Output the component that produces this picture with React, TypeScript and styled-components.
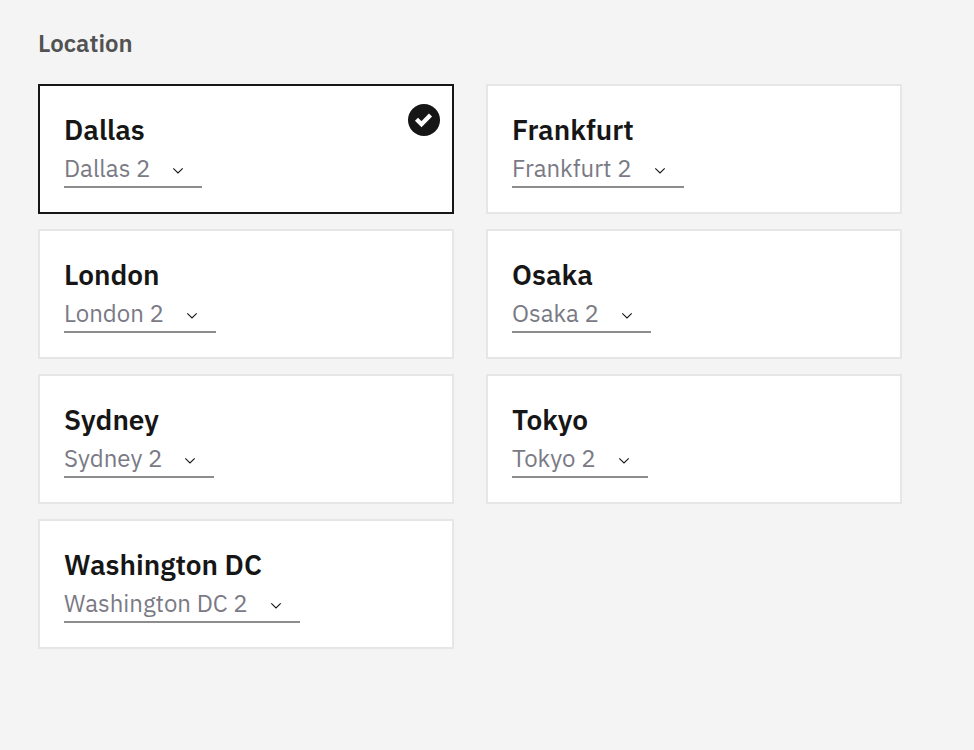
import { useState } from "react";
import styled, { createGlobalStyle } from "styled-components";

const GlobalStyle = createGlobalStyle`
  * { box-sizing: border-box; }
  body {
    margin: 0;
    background: #f4f4f4;
    color: #161616;
    font-family: "IBM Plex Sans", "Noto Sans", sans-serif;
  }
`;

const Section = styled.fieldset`
  margin: 0;
  padding: 27px 72px 28px 38px;
  border: 0;
  min-width: 0;
`;

const Heading = styled.legend`
  float: left;
  width: 100%;
  margin-bottom: 25px;
  padding: 0;
  color: #525252;
  font-size: 24px;
  font-weight: 600;
  line-height: 32px;
`;

const Grid = styled.div`
  clear: both;
  display: grid;
  grid-template-columns: repeat(2, minmax(0, 1fr));
  column-gap: 32px;
  row-gap: 15px;
`;

const Card = styled.div<{ $selected: boolean }>`
  position: relative;
  display: flex;
  flex-direction: column;
  align-items: flex-start;
  padding: 26px 24px 24px;
  background: #fff;
  border: 2px solid ${(p) => (p.$selected ? "#161616" : "#e6e6e6")};
`;

const CardLabel = styled.label`
  cursor: pointer;
  font-size: 28px;
  font-weight: 600;
  line-height: 36px;
`;

const Radio = styled.input`
  appearance: none;
  position: absolute;
  inset: 0;
  margin: 0;
  cursor: pointer;
`;

const Badge = styled.svg`
  position: absolute;
  top: 18px;
  right: 12px;
  width: 32px;
  height: 32px;
  pointer-events: none;
`;

const SelectBox = styled.div`
  position: relative;
  display: grid;
  align-items: center;
`;

const Select = styled.select`
  appearance: none;
  field-sizing: content;
  height: 40px;
  padding: 2px 52px 0 0;
  border: 0;
  border-bottom: 2px solid #8d8d8d;
  border-radius: 0;
  background: transparent;
  color: #7a7a85;
  font: 400 24px "IBM Plex Sans", "Noto Sans", sans-serif;
`;

const Chevron = styled.svg`
  position: absolute;
  right: 18px;
  bottom: 13px;
  width: 12px;
  height: 8px;
  pointer-events: none;
`;

const cities = ["Dallas", "Frankfurt", "London", "Osaka", "Sydney", "Tokyo", "Washington DC"];

export default function App() {
  const [selected, setSelected] = useState("Dallas");
  return (
    <>
      <GlobalStyle />
      <Section>
        <Heading>Location</Heading>
        <Grid>
          {cities.map((city) => {
            const id = city.toLowerCase().replace(" ", "-");
            return (
              <Card key={city} $selected={city === selected}>
                <Radio
                  type="radio"
                  name="location"
                  id={id}
                  checked={city === selected}
                  onChange={() => setSelected(city)}
                />
                <CardLabel htmlFor={id}>{city}</CardLabel>
                <SelectBox>
                  <Select aria-label={`${city} data center`} defaultValue="2">
                    <option value="2">{city} 2</option>
                  </Select>
                  <Chevron viewBox="0 0 12 8" aria-hidden="true">
                    <path d="M1.3 1.3 6 6 10.7 1.3" fill="none" stroke="#161616" strokeWidth="1.1" />
                  </Chevron>
                </SelectBox>
                {city === selected && (
                  <Badge viewBox="0 0 32 32" aria-hidden="true">
                    <circle cx="16" cy="16" r="16" fill="#161616" />
                    <path d="M8.5 15.2 13.5 20.2 22.5 11" fill="none" stroke="#fff" strokeWidth="4.4" />
                  </Badge>
                )}
              </Card>
            );
          })}
        </Grid>
      </Section>
    </>
  );
}
